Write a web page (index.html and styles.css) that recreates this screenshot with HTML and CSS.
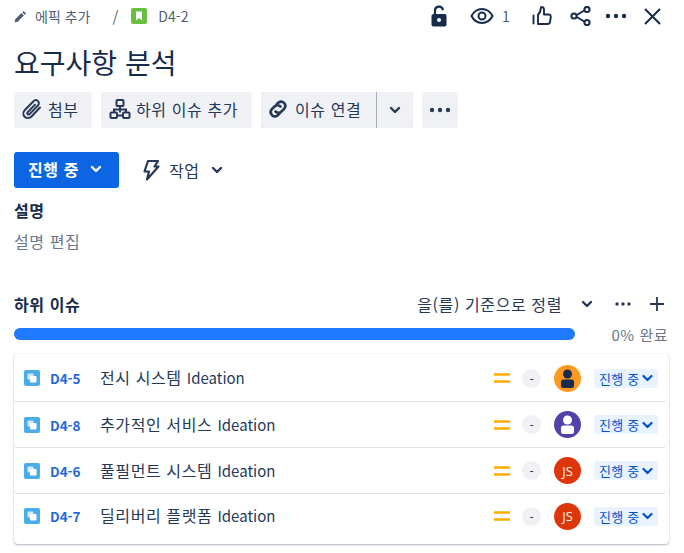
FILE: index.html
```html
<!DOCTYPE html>
<html lang="ko">
<head>
    <meta charset="UTF-8">
    <meta name="viewport" content="width=device-width, initial-scale=1.0">
    <title>D4-2 요구사항 분석</title>
    <link rel="stylesheet" href="styles.css">
</head>
<body>
<div class="issue">
    <div class="topbar">
        <div class="crumbs">
            <svg class="crumb-pencil" width="13" height="13" viewBox="0 0 13 13"><path d="M9.6.9l2.5 2.5-1.4 1.4-2.5-2.5zM7.4 3.1l2.5 2.5-6.2 6.2L.7 12.3l.5-3z" fill="#505f79"/></svg>
            <span class="crumb-text">에픽 추가</span>
            <span class="crumb-slash">/</span>
            <svg class="crumb-story" width="16" height="16" viewBox="0 0 16 16"><rect width="16" height="16" rx="2" fill="#6abf40"/><path d="M5 3.5h6v9l-3-2.4-3 2.4z" fill="#fff"/></svg>
            <span class="crumb-text">D4-2</span>
        </div>
        <div class="top-actions">
            <svg class="act-lock" width="18" height="22" viewBox="0 0 18 22"><path d="M5 10V5.5a4 4 0 0 1 7.8-1.2" fill="none" stroke="#172b4d" stroke-width="2.2" stroke-linecap="round"/><rect x="1.5" y="9" width="15" height="12.5" rx="2" fill="#172b4d"/><circle cx="9" cy="15" r="2" fill="#fff"/></svg>
            <svg class="act-eye" width="24" height="18" viewBox="0 0 24 18"><path d="M1.5 9C4 4.2 7.6 2 12 2s8 2.2 10.5 7C20 13.8 16.4 16 12 16S4 13.8 1.5 9z" fill="none" stroke="#172b4d" stroke-width="2"/><circle cx="12" cy="9" r="3.5" fill="none" stroke="#172b4d" stroke-width="2"/></svg>
            <span class="watch-count">1</span>
            <svg class="act-like" width="20" height="20" viewBox="0 0 20 20"><path d="M1.5 9.5v8M6 18h9.5c1.3 0 2.3-.9 2.5-2l.8-5c.2-1.4-.8-2.5-2.2-2.5H12v-5C12 2 11 1 9.7 1 9 1 8.8 1.5 8.8 2c0 3-1.3 5.5-2.8 6.8z" fill="none" stroke="#172b4d" stroke-width="1.9" stroke-linejoin="round" stroke-linecap="round"/></svg>
            <svg class="act-share" width="21" height="20" viewBox="0 0 21 20"><path d="M5 10l11-6.5M5 10l11 6.5" stroke="#172b4d" stroke-width="2"/><circle cx="4" cy="10" r="2.6" fill="#fff" stroke="#172b4d" stroke-width="2"/><circle cx="17" cy="3.5" r="2.6" fill="#fff" stroke="#172b4d" stroke-width="2"/><circle cx="17" cy="16.5" r="2.6" fill="#fff" stroke="#172b4d" stroke-width="2"/></svg>
            <svg class="act-more" width="22" height="6" viewBox="0 0 22 6"><circle cx="3" cy="3" r="2.2" fill="#172b4d"/><circle cx="11" cy="3" r="2.2" fill="#172b4d"/><circle cx="19" cy="3" r="2.2" fill="#172b4d"/></svg>
            <svg class="act-close" width="17" height="17" viewBox="0 0 17 17"><path d="M1 1l15 15M16 1L1 16" stroke="#172b4d" stroke-width="2"/></svg>
        </div>
    </div>

    <h1 class="title">요구사항 분석</h1>

    <div class="toolbar">
        <button class="btn btn-attach ko">
            <svg width="22" height="24" viewBox="0 0 22 24"><path d="M19 10.5l-8.5 9c-2 2-5 2-6.8.2s-1.8-4.7.2-6.7l8.6-8.8c1.3-1.3 3.3-1.3 4.5-.1s1.2 3.1-.1 4.4l-8.3 8.6c-.6.6-1.5.6-2 .1s-.5-1.4.1-2l7.3-7.6" fill="none" stroke="#253858" stroke-width="2" stroke-linecap="round"/></svg>
            첨부
        </button>
        <button class="btn btn-child ko">
            <svg width="22" height="22" viewBox="0 0 22 22"><g fill="none" stroke="#253858" stroke-width="2"><rect x="7.5" y="2" width="7" height="6" rx="1"/><rect x="1.5" y="14.5" width="6.5" height="5.5" rx="1"/><rect x="14" y="14.5" width="6.5" height="5.5" rx="1"/><path d="M11 8v6.5M5 14.5v-3h12v3M8 17.5h6"/></g></svg>
            하위 이슈 추가
        </button>
        <div class="split">
            <button class="btn btn-link ko">
                <svg width="22" height="22" viewBox="0 0 22 22"><g fill="none" stroke="#253858" stroke-width="2.6" stroke-linecap="round"><path d="M9.5 6.5l2-2a4.3 4.3 0 0 1 6 6l-3 3a4.3 4.3 0 0 1-6 0"/><path d="M12.5 15.5l-2 2a4.3 4.3 0 0 1-6-6l3-3a4.3 4.3 0 0 1 6 0"/></g></svg>
                이슈 연결
            </button>
            <button class="btn btn-caret">
                <svg class="chev" width="12" height="8" viewBox="0 0 12 8"><path d="M2 2l4 4 4-4" fill="none" stroke="#253858" stroke-width="2.4" stroke-linecap="round" stroke-linejoin="round"/></svg>
            </button>
        </div>
        <button class="btn btn-more">
            <svg width="22" height="6" viewBox="0 0 22 6"><circle cx="3" cy="3" r="2.2" fill="#253858"/><circle cx="11" cy="3" r="2.2" fill="#253858"/><circle cx="19" cy="3" r="2.2" fill="#253858"/></svg>
        </button>
    </div>

    <div class="status-row">
        <button class="status-btn ko">
            진행 중
            <svg width="12" height="8" viewBox="0 0 12 8"><path d="M2 2l4 4 4-4" fill="none" stroke="#fff" stroke-width="2.4" stroke-linecap="round" stroke-linejoin="round"/></svg>
        </button>
        <div class="action-btn ko">
            <svg width="18" height="22" viewBox="0 0 18 22"><path d="M6 2h10l-3.5 5.5h4L5 20.5l2-8H2.5z" fill="none" stroke="#253858" stroke-width="2.2" stroke-linejoin="round"/></svg>
            <span>작업</span>
            <svg class="chev" width="12" height="8" viewBox="0 0 12 8"><path d="M2 2l4 4 4-4" fill="none" stroke="#253858" stroke-width="2.4" stroke-linecap="round" stroke-linejoin="round"/></svg>
        </div>
    </div>

    <h3 class="desc-label ko">설명</h3>
    <div class="desc-edit ko">설명 편집</div>

    <div class="child-head">
        <h3 class="child-title ko">하위 이슈</h3>
        <div class="child-tools">
            <span class="sort-label ko">을(를) 기준으로 정렬</span>
            <svg class="sort-chev" width="12" height="8" viewBox="0 0 12 8"><path d="M2 2l4 4 4-4" fill="none" stroke="#253858" stroke-width="2.4" stroke-linecap="round" stroke-linejoin="round"/></svg>
            <svg class="child-more" width="16" height="4" viewBox="0 0 16 4"><circle cx="2" cy="2" r="1.7" fill="#253858"/><circle cx="8" cy="2" r="1.7" fill="#253858"/><circle cx="14" cy="2" r="1.7" fill="#253858"/></svg>
            <svg class="child-add" width="14" height="14" viewBox="0 0 14 14"><path d="M7 0v14M0 7h14" stroke="#253858" stroke-width="1.8"/></svg>
        </div>
    </div>

    <div class="progress-row">
        <div class="progress-bar"></div>
        <span class="progress-text">0% 완료</span>
    </div>

    <div class="child-list">
        <div class="child-item">
            <svg class="type-icon" width="16" height="16" viewBox="0 0 16 16"><use href="#task-type"/></svg>
            <a class="child-key">D4-5</a>
            <span class="child-name ko">전시 시스템 <span class="latin">Ideation</span></span>
            <svg class="prio" width="16" height="10" viewBox="0 0 16 10"><path d="M0 1.5h16M0 8.5h16" stroke="#ffab00" stroke-width="2.6"/></svg>
            <span class="dash">-</span>
            <svg class="avatar" width="27" height="27" viewBox="0 0 27 27"><circle cx="13.5" cy="13.5" r="13.5" fill="#ff991f"/><circle cx="13.5" cy="9" r="4.5" fill="#172b4d"/><rect x="7" y="14.5" width="13" height="8.5" rx="2.5" fill="#172b4d"/></svg>
            <span class="lozenge">진행 중<svg width="11" height="8" viewBox="0 0 11 8"><path d="M1.5 2l4 4 4-4" fill="none" stroke="#0052cc" stroke-width="2.2" stroke-linecap="round" stroke-linejoin="round"/></svg></span>
        </div>
        <div class="child-item">
            <svg class="type-icon" width="16" height="16" viewBox="0 0 16 16"><use href="#task-type"/></svg>
            <a class="child-key">D4-8</a>
            <span class="child-name ko">추가적인 서비스 <span class="latin">Ideation</span></span>
            <svg class="prio" width="16" height="10" viewBox="0 0 16 10"><path d="M0 1.5h16M0 8.5h16" stroke="#ffab00" stroke-width="2.6"/></svg>
            <span class="dash">-</span>
            <svg class="avatar" width="27" height="27" viewBox="0 0 27 27"><circle cx="13.5" cy="13.5" r="13.5" fill="#5243aa"/><circle cx="13.5" cy="9" r="4.5" fill="#fff"/><rect x="7" y="14.5" width="13" height="8.5" rx="2.5" fill="#fff"/></svg>
            <span class="lozenge">진행 중<svg width="11" height="8" viewBox="0 0 11 8"><path d="M1.5 2l4 4 4-4" fill="none" stroke="#0052cc" stroke-width="2.2" stroke-linecap="round" stroke-linejoin="round"/></svg></span>
        </div>
        <div class="child-item">
            <svg class="type-icon" width="16" height="16" viewBox="0 0 16 16"><use href="#task-type"/></svg>
            <a class="child-key">D4-6</a>
            <span class="child-name ko">풀필먼트 시스템 <span class="latin">Ideation</span></span>
            <svg class="prio" width="16" height="10" viewBox="0 0 16 10"><path d="M0 1.5h16M0 8.5h16" stroke="#ffab00" stroke-width="2.6"/></svg>
            <span class="dash">-</span>
            <span class="avatar avatar-js">JS</span>
            <span class="lozenge">진행 중<svg width="11" height="8" viewBox="0 0 11 8"><path d="M1.5 2l4 4 4-4" fill="none" stroke="#0052cc" stroke-width="2.2" stroke-linecap="round" stroke-linejoin="round"/></svg></span>
        </div>
        <div class="child-item">
            <svg class="type-icon" width="16" height="16" viewBox="0 0 16 16"><use href="#task-type"/></svg>
            <a class="child-key">D4-7</a>
            <span class="child-name ko">딜리버리 플랫폼 <span class="latin">Ideation</span></span>
            <svg class="prio" width="16" height="10" viewBox="0 0 16 10"><path d="M0 1.5h16M0 8.5h16" stroke="#ffab00" stroke-width="2.6"/></svg>
            <span class="dash">-</span>
            <span class="avatar avatar-js">JS</span>
            <span class="lozenge">진행 중<svg width="11" height="8" viewBox="0 0 11 8"><path d="M1.5 2l4 4 4-4" fill="none" stroke="#0052cc" stroke-width="2.2" stroke-linecap="round" stroke-linejoin="round"/></svg></span>
        </div>
    </div>
</div>

<!-- shared task type icon -->
<svg class="defs" width="0" height="0">
    <symbol id="task-type" viewBox="0 0 16 16">
        <rect width="16" height="16" rx="2" fill="#4bade8"/>
        <rect x="3.5" y="3.5" width="6" height="6" rx="1" fill="#cfeafa"/>
        <rect x="6" y="6" width="6.5" height="6.5" rx="1" fill="#fff"/>
    </symbol>
</svg>
</body>
</html>
```

FILE: styles.css
```css
* { box-sizing: border-box; }
html, body { height: 100%; }
body { margin: 0; background: #fff; color: #172b4d; font-family: "Noto Sans CJK KR", "Noto Sans", sans-serif; font-size: 14px; overflow: hidden; }
svg { display: block; flex: none; }
.defs { position: absolute; }
.issue { padding: 0 15px 0 14px; }

/* small hangul runs wider in the reference */
.ko { font-size: 16px; letter-spacing: .6px; }
.latin { font-size: 15px; letter-spacing: 0; }

/* top row */
.topbar { display: flex; align-items: center; justify-content: space-between; height: 32px; }
.crumbs { display: flex; align-items: center; color: #505f79; }
.crumb-text { line-height: 16px; }
.crumb-slash { margin: 0 13px 0 22px; font-size: 15px; }
.crumb-story { margin-right: 11px; }
.crumb-pencil { margin-right: 8px; }
.top-actions { display: flex; align-items: center; padding-right: 8px; }
.act-eye { margin-left: 22px; }
.watch-count { margin-left: 8px; color: #505f79; font-size: 14px; width: 9px; }
.act-like { margin-left: 21px; }
.act-share { margin-left: 18px; }
.act-more { margin-left: 14px; }
.act-close { margin-left: 17px; }

.title { margin: 14px 0 0; height: 32px; font-size: 28px; font-weight: 400; line-height: 32px; }

/* buttons */
.toolbar { display: flex; gap: 9px; margin-top: 14px; }
.btn { display: flex; align-items: center; height: 36px; padding: 0 0 2px; border: 0; border-radius: 3px; background: #f0f1f4; color: #253858; font-family: inherit; cursor: pointer; }
.btn-attach { width: 78px; padding-left: 7px; gap: 5px; }
.btn-child { width: 151px; padding-left: 8px; gap: 5px; }
.split { display: flex; gap: 1px; background: #a5adba; border-radius: 3px; }
.btn-link { width: 115px; padding-left: 6px; gap: 6px; border-radius: 3px 0 0 3px; }
.btn-caret { width: 36px; padding: 0; justify-content: center; border-radius: 0 3px 3px 0; }
.btn-more { width: 36px; padding: 0; justify-content: center; }

.status-row { display: flex; align-items: center; margin-top: 24px; }
.status-btn { display: flex; align-items: center; gap: 11px; width: 105px; height: 36px; padding: 0 0 2px 14px; border: 0; border-radius: 3px; background: #0c66e4; color: #fff; font-family: inherit; font-weight: 700; cursor: pointer; }
.action-btn { display: flex; align-items: center; margin-left: 23px; color: #253858; }
.action-btn span { margin-left: 9px; }
.action-btn .chev { margin-left: 11px; }

.desc-label { margin: 12px 0 0; line-height: 20px; font-weight: 700; }
.desc-edit { margin-top: 11px; color: #6b778c; line-height: 20px; }

/* child issues */
.child-head { display: flex; align-items: center; justify-content: space-between; margin-top: 43px; height: 20px; }
.child-title { margin: 0; font-weight: 700; }
.child-tools { display: flex; align-items: center; color: #253858; }
.sort-chev { margin-left: 19px; }
.child-more { margin-left: 22px; }
.child-add { margin-left: 19px; margin-right: 5px; }

.progress-row { display: flex; align-items: center; margin-top: 10px; height: 20px; padding-right: 1px; }
.progress-bar { width: 561px; height: 12px; border-radius: 6px; background: #1f7aff; }
.progress-text { margin-left: auto; color: #6b778c; font-size: 15px; letter-spacing: .5px; }

.child-list { margin-top: 10px; width: 655px; height: 190px; border-radius: 4px; box-shadow: 0 1px 2px rgba(9,30,66,.3), 0 0 1px rgba(9,30,66,.2); }
.child-item { display: flex; align-items: center; height: 46px; padding: 0 8px 0 10px; margin-right: 3px; border-bottom: 1px solid #dfe1e6; border-radius: 0 0 4px 4px; }
.child-item:first-child { height: 48px; padding-top: 1px; }
.child-item:last-child { border-bottom: 0; height: 50px; padding-bottom: 6px; }
.type-icon { margin-right: 10px; }
.child-key { width: 50px; color: #2468d8; font-size: 13.5px; font-weight: 700; }
.child-name { flex: 1; padding-bottom: 2px; color: #253858; white-space: nowrap; }
.prio { margin-right: 12px; }
.dash { display: flex; align-items: center; justify-content: center; width: 19px; height: 19px; margin-right: 13px; border-radius: 50%; background: #f0f1f4; font-size: 12px; color: #172b4d; }
.avatar { margin-right: 13px; }
.avatar-js { display: flex; align-items: center; justify-content: center; flex: none; width: 27px; height: 27px; border-radius: 50%; background: #de350b; color: #fff; font-family: "Open Sans", sans-serif; font-size: 13px; }
.lozenge { display: flex; align-items: center; justify-content: space-between; flex: none; width: 64px; height: 19px; padding: 0 5px; border-radius: 3px; background: #e9f2ff; color: #0052cc; font-size: 13px; letter-spacing: .2px; white-space: nowrap; }
```
